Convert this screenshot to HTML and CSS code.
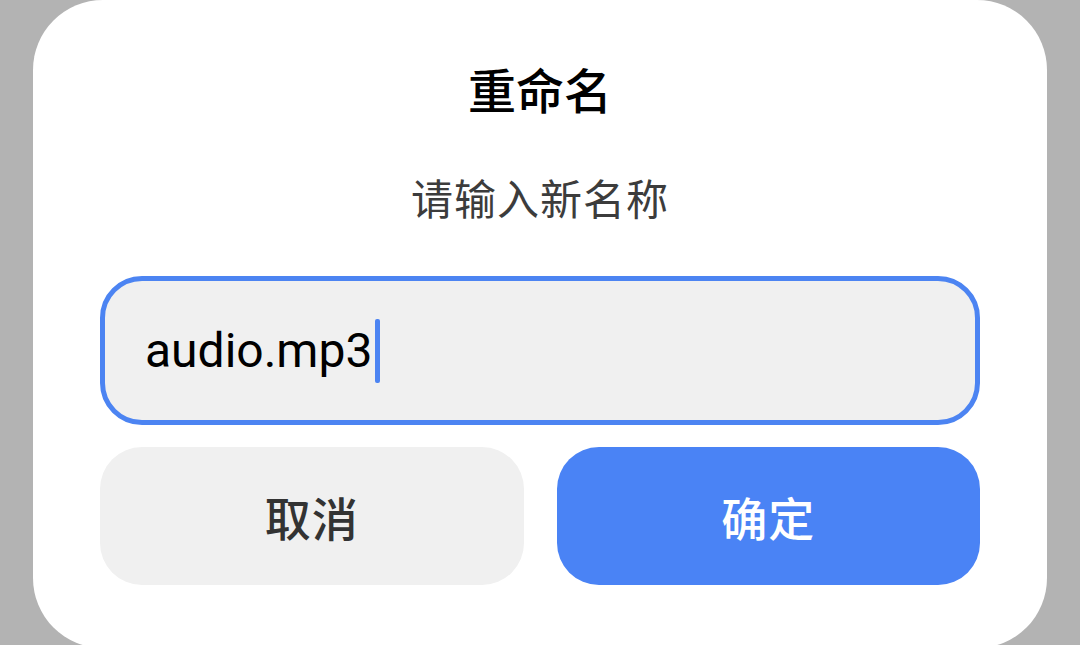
FILE: index.html
```html
<!DOCTYPE html>
<html lang="zh">
<head>
<meta charset="utf-8">
<title>重命名</title>
<link rel="stylesheet" href="styles.css">
</head>
<body>
<div class="dialog">
  <div class="title">重命名</div>
  <div class="subtitle">请输入新名称</div>
  <div class="field">
    <span class="value">audio.mp3</span><span class="caret"></span>
  </div>
  <div class="actions">
    <div class="btn btn-cancel">取消</div>
    <div class="btn btn-ok">确定</div>
  </div>
</div>
</body>
</html>
```

FILE: styles.css
```css
html, body {
  margin: 0;
  padding: 0;
}
body {
  width: 1080px;
  height: 645px;
  overflow: hidden;
  background: #b3b3b3;
  font-family: "Noto Sans CJK SC", "Noto Sans", sans-serif;
}
.dialog {
  box-sizing: border-box;
  margin: 0 33px;
  height: 648px;
  background: #ffffff;
  border-radius: 70px;
  padding: 64px 67px 0 67px;
  display: flex;
  flex-direction: column;
  align-items: stretch;
}
.title {
  font-size: 48px;
  line-height: 48px;
  height: 48px;
  font-weight: 500;
  color: #000000;
  text-align: center;
}
.subtitle {
  margin-top: 64px;
  font-size: 42px;
  line-height: 42px;
  height: 42px;
  color: #3c3c3c;
  text-align: center;
  letter-spacing: 1px;
}
.field {
  box-sizing: border-box;
  margin-top: 58px;
  height: 149px;
  border: 5px solid #4c84f2;
  border-radius: 42px;
  background: #f0f0f0;
  padding-left: 40px;
  display: flex;
  align-items: center;
}
.value {
  font-family: Roboto, "Noto Sans", sans-serif;
  font-size: 48px;
  line-height: 48px;
  color: #000000;
}
.caret {
  width: 5px;
  height: 64px;
  margin-left: 3px;
  border-radius: 2px;
  background: #4c84f2;
}
.actions {
  margin-top: 22px;
  display: flex;
  gap: 33px;
}
.btn {
  flex: 1;
  height: 138px;
  border-radius: 42px;
  display: flex;
  align-items: center;
  justify-content: center;
  font-size: 46px;
  font-weight: 500;
  letter-spacing: 1px;
}
.btn-cancel {
  background: #f0f0f0;
  color: #333333;
}
.btn-ok {
  background: #4a83f5;
  color: #ffffff;
}
```
